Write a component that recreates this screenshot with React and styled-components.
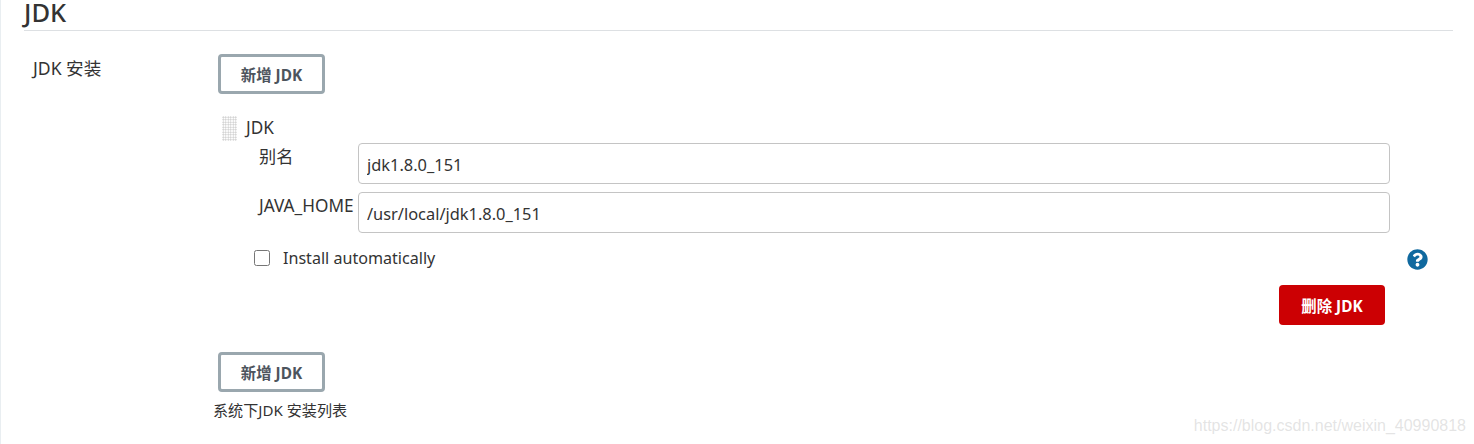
import React from "react";
import styled, { createGlobalStyle } from "styled-components";
import { FaQuestionCircle } from "react-icons/fa";

const GlobalStyle = createGlobalStyle`
  html, body {
    margin: 0;
    padding: 0;
    background: #fff;
  }
  body {
    font-family: "Noto Sans", "Noto Sans CJK SC", sans-serif;
    color: #333;
  }
`;

const App = () => {
  return (
    <Page>
      <GlobalStyle />
      <Title>JDK</Title>
      <Section>
        <SectionLabel>JDK 安装</SectionLabel>
        <SectionBody>
          <OutlineButton>新增 JDK</OutlineButton>
          <Chunk>
            <ChunkHeader>
              <DragHandle />
              <ChunkName>JDK</ChunkName>
            </ChunkHeader>
            <FieldRow>
              <FieldLabel>别名</FieldLabel>
              <TextInput defaultValue="jdk1.8.0_151" />
            </FieldRow>
            <FieldRow>
              <FieldLabel>JAVA_HOME</FieldLabel>
              <TextInput defaultValue="/usr/local/jdk1.8.0_151" />
            </FieldRow>
            <CheckRow>
              <CheckLabel>
                <Check type="checkbox" />
                Install automatically
              </CheckLabel>
              <HelpIcon />
            </CheckRow>
            <DeleteRow>
              <DeleteButton>删除 JDK</DeleteButton>
            </DeleteRow>
          </Chunk>
          <OutlineButton>新增 JDK</OutlineButton>
          <Hint>系统下JDK 安装列表</Hint>
        </SectionBody>
      </Section>
      <Watermark>https://blog.csdn.net/weixin_40990818</Watermark>
    </Page>
  );
};

const Page = styled.div`
  position: relative;
  box-sizing: border-box;
  width: 1474px;
  height: 444px;
  overflow: hidden;
  padding: 0 21px 0 23px;
  border-left: 1px solid #e9eef1;
`;

const Title = styled.h2`
  box-sizing: border-box;
  height: 31px;
  margin: 0;
  font-size: 25.5px;
  line-height: 24px;
  font-weight: 500;
  color: #333;
  border-bottom: 1px solid #dde0e3;
`;

const Section = styled.div`
  display: flex;
  padding-top: 23px;
`;

const SectionLabel = styled.div`
  width: 194px;
  padding: 3px 0 0 9px;
  box-sizing: border-box;
  font-size: 17.6px;
  line-height: 22px;
`;

const SectionBody = styled.div`
  display: flex;
  flex-direction: column;
  align-items: flex-start;
  flex: 1;
`;

const OutlineButton = styled.button`
  box-sizing: border-box;
  width: 107px;
  height: 40px;
  padding: 0;
  background: #fff;
  border: 3px solid #9aa7ae;
  border-radius: 4px;
  font-family: inherit;
  font-size: 15.4px;
  font-weight: 700;
  color: #4d545d;
`;

const Chunk = styled.div`
  width: 100%;
  padding-top: 21px;
  padding-bottom: 27px;
`;

const ChunkHeader = styled.div`
  display: flex;
  align-items: center;
  height: 26px;
  margin-left: 4px;
`;

const DragHandle = styled.div`
  width: 15px;
  height: 25px;
  background-image: radial-gradient(#c8c8c8 0.8px, transparent 0.9px);
  background-size: 2.5px 2.5px;
`;

const ChunkName = styled.span`
  margin-left: 9px;
  font-size: 17.2px;
  line-height: 22px;
  color: #333;
`;

const FieldRow = styled.div`
  display: flex;
  align-items: flex-start;
  width: 1131px;
  height: 41px;
  margin-left: 41px;
  margin-top: 2px;
  & + & {
    margin-top: 8px;
  }
`;

const FieldLabel = styled.div`
  width: 99px;
  flex-shrink: 0;
  padding-top: 3px;
  font-size: 17.2px;
  line-height: 22px;
  white-space: nowrap;
`;

const TextInput = styled.input`
  box-sizing: border-box;
  flex: 1;
  min-width: 0;
  height: 41px;
  padding: 1px 8px 0;
  border: 1px solid #c4c4c4;
  border-radius: 4px;
  font-family: inherit;
  font-size: 16.4px;
  color: #333;
  outline: none;
`;

const CheckRow = styled.div`
  display: flex;
  align-items: center;
  justify-content: space-between;
  width: 1174px;
  height: 22px;
  margin: 14px 0 0 36px;
`;

const CheckLabel = styled.label`
  display: flex;
  align-items: center;
  font-size: 16.1px;
  line-height: 22px;
  color: #333;
`;

const Check = styled.input`
  width: 16px;
  height: 16px;
  margin: 0 13px 0 0;
`;

const HelpIcon = styled(FaQuestionCircle)`
  width: 21px;
  height: 21px;
  margin-top: 2px;
  color: #10699f;
`;

const DeleteRow = styled.div`
  display: flex;
  justify-content: flex-end;
  width: 1167px;
  margin-top: 16px;
`;

const DeleteButton = styled.button`
  box-sizing: border-box;
  width: 106px;
  height: 40px;
  padding: 0;
  background: #cc0003;
  border: none;
  border-radius: 4px;
  font-family: inherit;
  font-size: 15.4px;
  font-weight: 700;
  color: #fff;
`;

const Hint = styled.div`
  margin: 8px 0 0 -5px;
  font-size: 15.1px;
  line-height: 20px;
  color: #333;
`;

const Watermark = styled.div`
  position: absolute;
  right: 8px;
  bottom: 8px;
  font-family: "Liberation Sans", Arial, sans-serif;
  font-size: 16px;
  line-height: 20px;
  color: rgba(190, 190, 190, 0.42);
  white-space: nowrap;
`;

export default App;
